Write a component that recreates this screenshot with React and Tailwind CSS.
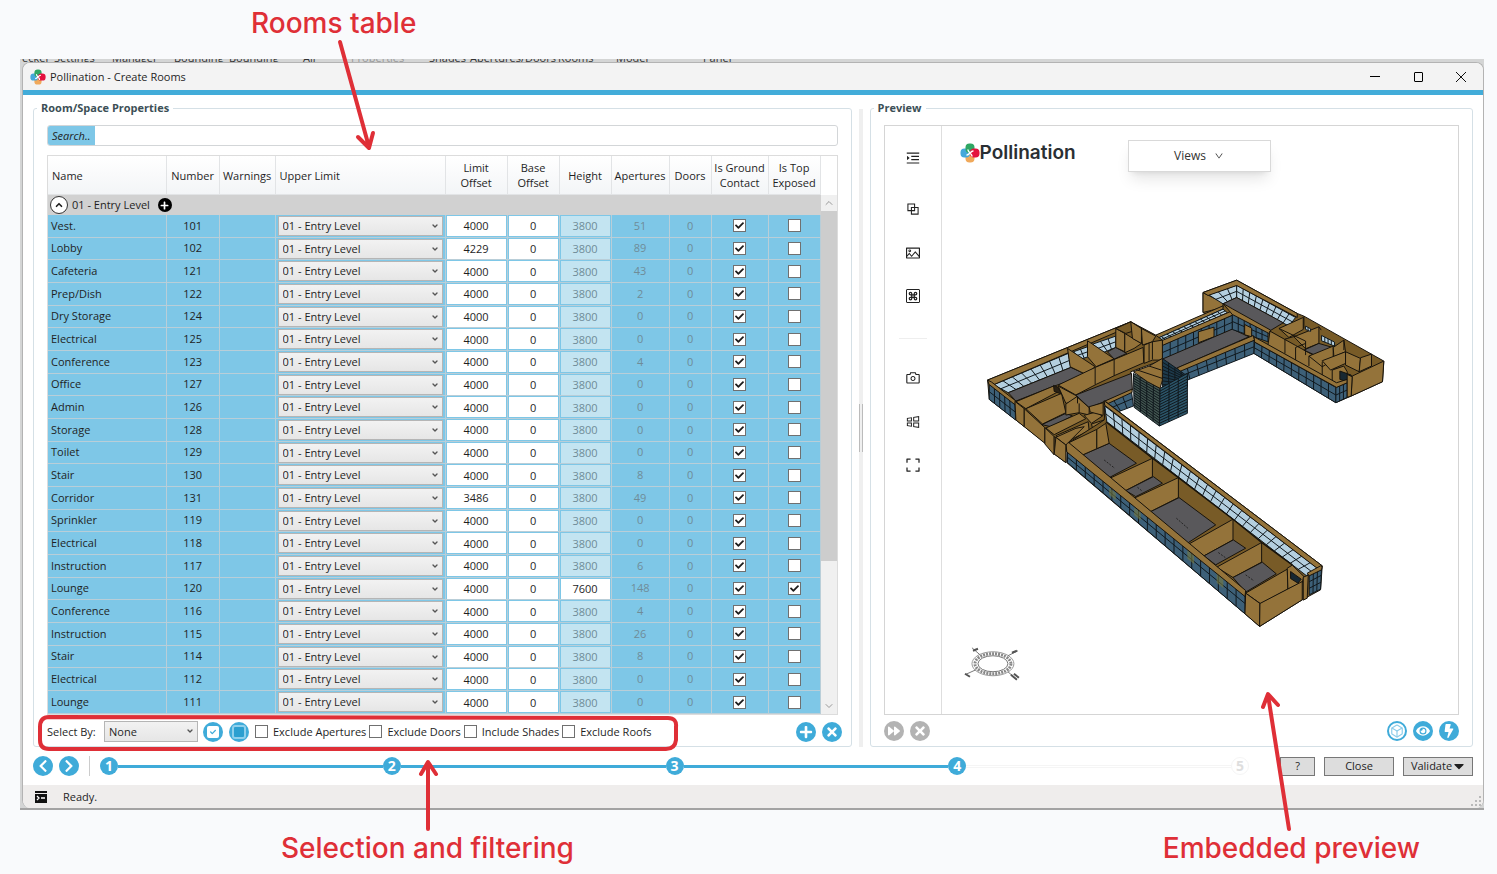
import { useState } from 'react';
import { FaPlus, FaTimes, FaCheck, FaChevronLeft, FaChevronRight, FaForward, FaEye, FaBolt, FaCaretDown } from 'react-icons/fa';
import {
  AiOutlineMenuUnfold, AiOutlineBlock, AiOutlinePicture, AiOutlineCamera,
  AiOutlineWindows, AiOutlineExpand, AiOutlineDown,
} from 'react-icons/ai';
import { Box, ChevronDown, ChevronUp, Command } from 'lucide-react';

const LEVEL = '01 - Entry Level';

// name, number, limit offset, apertures, height, top exposed
const ROOMS = [
  ['Vest.', 101, 4000, 51],
  ['Lobby', 102, 4229, 89],
  ['Cafeteria', 121, 4000, 43],
  ['Prep/Dish', 122, 4000, 2],
  ['Dry Storage', 124, 4000, 0],
  ['Electrical', 125, 4000, 0],
  ['Conference', 123, 4000, 4],
  ['Office', 127, 4000, 0],
  ['Admin', 126, 4000, 0],
  ['Storage', 128, 4000, 0],
  ['Toilet', 129, 4000, 0],
  ['Stair', 130, 4000, 8],
  ['Corridor', 131, 3486, 49],
  ['Sprinkler', 119, 4000, 0],
  ['Electrical', 118, 4000, 0],
  ['Instruction', 117, 4000, 6],
  ['Lounge', 120, 4000, 148, 7600, true],
  ['Conference', 116, 4000, 4],
  ['Instruction', 115, 4000, 26],
  ['Stair', 114, 4000, 8],
  ['Electrical', 112, 4000, 0],
  ['Lounge', 111, 4000, 0],
];

const COLUMNS = [
  { label: 'Name', width: '', align: 'text-left px-1' },
  { label: 'Number', width: 'w-[53px]', align: 'text-center' },
  { label: 'Warnings', width: 'w-[56px]', align: 'text-center' },
  { label: 'Upper Limit', width: 'w-[170px]', align: 'text-left px-1' },
  { label: 'Limit Offset', width: 'w-[62px]', align: 'text-center px-2' },
  { label: 'Base Offset', width: 'w-[52px]', align: 'text-center px-2' },
  { label: 'Height', width: 'w-[52px]', align: 'text-center' },
  { label: 'Apertures', width: 'w-[58px]', align: 'text-center' },
  { label: 'Doors', width: 'w-[42px]', align: 'text-center' },
  { label: 'Is Ground Contact', width: 'w-[57px]', align: 'text-center' },
  { label: 'Is Top Exposed', width: 'w-[52px]', align: 'text-center' },
];

const FILTERS = ['Exclude Apertures', 'Exclude Doors', 'Include Shades', 'Exclude Roofs'];

const LogoMark = ({ className }) => (
  <svg viewBox="0 0 20 20" className={className} aria-hidden="true">
    <rect x="5.5" y="10" width="9" height="9.5" rx="4" fill="#f0a95b" />
    <rect x="0.5" y="5.5" width="9.5" height="9" rx="4" fill="#45a8da" />
    <rect x="5.5" y="0.5" width="9" height="9.5" rx="4" fill="#2fa764" />
    <rect x="10" y="5.5" width="9.5" height="9" rx="4" fill="#e4123f" />
    <path d="M10 10 C9 9 8 8 8 7 M10 10 C11 9 12 8 13 8 M10 10 C11 11 12 12 12 13 M10 10 C9 11 8 12 7 12" stroke="#fff" strokeWidth="1.4" fill="none" strokeLinecap="round" />
  </svg>
);

const RoundButton = ({ label, children, className = 'bg-[#3fabd9] text-white' }) => (
  <button type="button" aria-label={label} title={label}
    className={`flex h-5 w-5 shrink-0 items-center justify-center rounded-full ${className}`}>
    {children}
  </button>
);

const Tick = ({ label, checked, id }) => (
  <span className="relative inline-flex h-[13px] w-[13px] shrink-0">
    <input id={id} type="checkbox" defaultChecked={checked} aria-label={label}
      className="peer h-[13px] w-[13px] appearance-none border border-[#707070] bg-white" />
    <FaCheck className="pointer-events-none absolute left-[2px] top-[2px] hidden h-[9px] w-[9px] text-[#1c1c1c] peer-checked:block" />
  </span>
);

const Dropdown = ({ id, label, options, className }) => (
  <span className={`relative block ${className}`}>
    <select id={id} aria-label={label}
      className="block h-full w-full appearance-none border border-[#b5b5b5] bg-linear-to-b from-[#f2f2f2] to-[#e6e6e6] px-1 leading-4">
      {options.map(o => <option key={o}>{o}</option>)}
    </select>
    <ChevronDown className="pointer-events-none absolute right-1 top-[6px] h-2 w-2 text-[#555]" strokeWidth={4} />
  </span>
);

const GroupBox = ({ title, className, children }) => (
  <fieldset className={`min-w-0 rounded-[3px] border border-[#d5e0e6] px-[13px] pb-[2px] ${className}`}>
    <legend className="-ml-[10px] px-1 font-bold leading-4 text-[#3c4f56]">{title}</legend>
    {children}
  </fieldset>
);

function RoomsTable() {
  const [open, setOpen] = useState(true);
  const cell = 'border-b border-r border-[#b9ced8] p-0';

  return (
    <div className="mt-[9px] flex border border-[#dcdcdc]">
      <table className="h-[558px] min-w-0 flex-1 table-fixed border-separate border-spacing-0">
        <thead>
          <tr>
            {COLUMNS.map(c => (
              <th key={c.label}
                className={`h-[39px] border-b border-r border-[#e2e4e6] bg-linear-to-b from-white to-[#f3f5f7] p-0 font-normal leading-[15px] ${c.width} ${c.align}`}>
                {c.label}
              </th>
            ))}
          </tr>
        </thead>
        <tbody>
          <tr>
            <td colSpan={11} className="h-[20px] bg-[#d1d1d1] p-0">
              <div className="flex items-center">
                <button type="button" aria-label="Toggle level" onClick={() => setOpen(!open)}
                  className="ml-[2px] flex h-[18px] w-[18px] items-center justify-center rounded-full border border-[#333] bg-white">
                  <ChevronUp className="h-[10px] w-[10px]" strokeWidth={4} />
                </button>
                <span className="ml-1 leading-4">{LEVEL}</span>
                <button type="button" aria-label="Add to level"
                  className="ml-2 flex h-[14px] w-[14px] items-center justify-center rounded-full bg-black text-white">
                  <FaPlus className="h-[9px] w-[9px]" />
                </button>
              </div>
            </td>
          </tr>
          {open && ROOMS.map(([name, number, offset, apertures, height, top]) => (
            <tr key={number} className="bg-[#7ec7e7]">
              <td className={`${cell} pl-[3px]`}>{name}</td>
              <td className={`${cell} text-center`}>{number}</td>
              <td className={cell} />
              <td className={`${cell} px-[2px]`}>
                <Dropdown label={`Upper limit ${number}`} options={[LEVEL]} className="h-5" />
              </td>
              <td className={`${cell} px-px`}>
                <input aria-label={`Limit offset ${number}`} defaultValue={offset} className="block h-5 w-full bg-white text-center" />
              </td>
              <td className={`${cell} px-px`}>
                <input aria-label={`Base offset ${number}`} defaultValue={0} className="block h-5 w-full bg-white text-center" />
              </td>
              <td className={`${cell} px-px`}>
                <input aria-label={`Height ${number}`} defaultValue={height ?? 3800} disabled={!height}
                  className="block h-5 w-full bg-white text-center disabled:bg-[#c3e4f1] disabled:text-[#6f8c98]" />
              </td>
              <td className={`${cell} text-center text-[#6f8c98]`}>{apertures}</td>
              <td className={`${cell} text-center text-[#6f8c98]`}>0</td>
              <td className={cell}>
                <div className="flex justify-center"><Tick label={`Ground contact ${number}`} checked /></div>
              </td>
              <td className={cell}>
                <div className="flex justify-center"><Tick label={`Top exposed ${number}`} checked={!!top} /></div>
              </td>
            </tr>
          ))}
        </tbody>
      </table>
      <div className="flex w-4 flex-col bg-[#f0f0f0]">
        <div className="h-[39px] bg-white" />
        <div className="flex h-4 items-center justify-center"><ChevronUp className="h-3 w-3 text-[#999]" /></div>
        <div className="h-[350px] bg-[#cdcdcd]" />
        <div className="flex flex-1 items-end justify-center pb-[2px]"><ChevronDown className="h-3 w-3 text-[#999]" /></div>
      </div>
    </div>
  );
}

function SelectionBar() {
  return (
    <div className="flex items-center pb-[2px] pt-[6px]">
      <label htmlFor="select-by" className="w-[57px] leading-4">Select By:</label>
      <Dropdown id="select-by" label="Select By" options={['None']} className="h-[21px] w-[94px]" />
      <div className="ml-[5px] flex gap-[6px]">
        <RoundButton label="Select checked">
          <span className="flex h-3 w-3 items-center justify-center rounded-[2px] bg-white text-[#3fabd9]"><FaCheck className="h-[6px] w-[6px]" /></span>
        </RoundButton>
        <RoundButton label="Select all">
          <span className="h-[14px] w-[14px] rounded-[3px] border-2 border-[#8fd0ec] bg-[#2b9fd0]" />
        </RoundButton>
      </div>
      <div className="ml-[6px] flex gap-[3px]">
        {FILTERS.map((f, i) => (
          <label key={f} htmlFor={`filter-${i}`} className="flex items-center gap-[5px] whitespace-nowrap leading-4">
            <Tick id={`filter-${i}`} label={f} />
            {f}
          </label>
        ))}
      </div>
      <div className="-mr-1 ml-auto flex gap-[6px]">
        <RoundButton label="Add"><FaPlus className="h-[14px] w-[14px]" /></RoundButton>
        <RoundButton label="Remove"><FaTimes className="h-[14px] w-[14px]" /></RoundButton>
      </div>
    </div>
  );
}

/* ── Model drawing helpers ── */

const TAN = '#94733a';
const DARK = '#785b27';
const FLOOR = '#59585b';
const LIGHT = '#b4cfdf';
const BLUE = '#3d6078';

const Face = ({ p, fill = TAN }) => (
  <polygon points={p} fill={fill} stroke="#17130c" strokeWidth="3" strokeLinejoin="round" />
);

// Glazed quad a-b (top edge) and d-c (bottom edge) with mullions
const Glass = ({ a, b, c, d, cols, rows = 2, fill = BLUE }) => {
  const mix = (p, q, t) => [p[0] + (q[0] - p[0]) * t, p[1] + (q[1] - p[1]) * t];
  const lines = [];
  for (let i = 1; i < cols; i++) lines.push([mix(a, b, i / cols), mix(d, c, i / cols)]);
  for (let j = 1; j < rows; j++) lines.push([mix(a, d, j / rows), mix(b, c, j / rows)]);
  return (
    <g stroke="#10181d" strokeWidth="3">
      <polygon points={[a, b, c, d].join(' ')} fill={fill} />
      {lines.map(([p, q], i) => <line key={i} x1={p[0]} y1={p[1]} x2={q[0]} y2={q[1]} />)}
    </g>
  );
};

const EastWing = () => (
  <g transform="translate(1180 260) scale(0.3333)">
    <Face p="67,97 168,60 350,160 370,168 610,303 606,365 512,408 466,428 220,280 67,157" fill={DARK} />
    <Face p="67,97 127,128 127,142 67,157" />
    <Glass a={[84, 104]} b={[168, 75]} c={[168, 112]} d={[127, 131]} cols={3} fill={LIGHT} />
    <Glass a={[168, 75]} b={[345, 172]} c={[325, 198]} d={[168, 112]} cols={9} fill={LIGHT} />
    <Face p="67,97 168,60 350,160 350,172 168,76 82,106" />
    <Face p="127,131 168,112 308,188 268,212 155,152" fill={FLOOR} />
    <Face p="-75,225 127,137 127,147 -75,237" />
    <Glass a={[-75, 237]} b={[127, 147]} c={[140, 158]} d={[-60, 247]} cols={12} fill={LIGHT} />
    <Glass a={[-55, 255]} b={[155, 165]} c={[155, 208]} d={[-55, 300]} cols={9} />
    <Face p="-65,245 155,152 158,164 -55,256" />
    <Face p="53,215 100,201 100,230 53,248" />
    <Face p="-55,297 155,207 205,230 -20,328" fill={FLOOR} />
    <Glass a={[155, 160]} b={[262, 215]} c={[262, 245]} d={[155, 208]} cols={6} />
    <Face p="192,193 213,204 213,230 192,224" />
    <Face p="127,130 155,146 270,210 265,220 155,163" />
    <Glass a={[-10, 332]} b={[220, 240]} c={[220, 280]} d={[0, 368]} cols={8} />
    <Face p="-10,323 218,226 222,240 -5,335" />
    <Face p="268,213 345,256 425,300 470,330 470,372 345,305 262,255" />
    <Face p="295,205 368,172 368,208 325,232" />
    <Face p="340,230 415,200 415,250 375,266" />
    <Face p="370,270 415,250 456,262 405,286" fill={FLOOR} />
    <Face p="385,288 458,258 458,300 425,320" />
    <Face p="458,262 490,240 495,275 460,290" />
    <Face p="425,302 495,275 495,310 450,330" />
    <Face p="495,275 540,295 536,335 495,315" />
    <Face p="540,293 573,282 573,318 536,335" />
    <path d="M295 205 375 243 375 285 M313 237 V280 M345 262 V300 M385 288 V318 M425 305 V345 M313 237 345 228 M345 262 375 250 M370 168 V205 M490 240 V270 M415 200 422 210" stroke="#17130c" strokeWidth="3" fill="none" />
    <Glass a={[375, 198]} b={[390, 206]} c={[390, 214]} d={[375, 208]} cols={2} rows={1} fill={LIGHT} />
    <Glass a={[423, 226]} b={[462, 246]} c={[462, 258]} d={[423, 242]} cols={4} rows={1} fill={LIGHT} />
    <Face p="455,330 490,318 500,335 500,370 470,372 455,362" />
    <Face p="478,333 512,345 512,368 478,358" fill="#182832" />
    <Glass a={[222, 246]} b={[466, 382]} c={[466, 428]} d={[220, 280]} cols={11} />
    <Glass a={[466, 382]} b={[500, 368]} c={[500, 412]} d={[466, 428]} cols={3} />
    <Face p="220,230 468,368 500,358 500,368 468,382 222,246" />
    <Face p="515,348 610,303 606,365 512,408" />
    <Face p="500,343 515,350 512,408 500,412" />
  </g>
);

const WestWing = () => (
  <g transform="translate(970 260) scale(0.3333)">
    <Face p="50,360 480,185 555,225 575,240 575,300 480,335 480,392 400,430 410,570 250,570 135,480 55,418" fill={DARK} />
    <Glass a={[68, 374]} b={[292, 280]} c={[300, 322]} d={[112, 398]} cols={8} fill={LIGHT} />
    <Glass a={[308, 275]} b={[350, 260]} c={[352, 290]} d={[328, 298]} cols={2} fill={LIGHT} />
    <Glass a={[366, 252]} b={[435, 228]} c={[435, 262]} d={[396, 278]} cols={3} fill={LIGHT} />
    <Face p="50,360 480,185 484,196 68,374" />
    <Face p="112,398 300,322 350,345 250,378 135,423" fill={FLOOR} />
    <Face p="290,265 373,320 345,343 298,320" />
    <Face p="350,242 430,296 376,320 350,290" />
    <Face p="410,275 435,262 468,280 430,297" fill={FLOOR} />
    <Face p="435,205 462,220 462,275 435,262" />
    <Face p="462,220 512,250 490,265 462,278" />
    <Face p="435,205 480,185 512,205 465,220" fill={DARK} />
    <Face p="480,185 512,205 512,250 485,235" />
    <Face p="512,205 555,228 545,245 515,255" />
    <Face p="262,375 373,322 517,262 519,308 430,347 376,373 315,405" />
    <Face p="520,255 545,245 575,240 575,300 545,300 520,310" />
    <path d="M373 322 V373 M430 297 V347 M535 250 V302 M545 245 V298" stroke="#17130c" strokeWidth="3" />
    <Face p="315,405 482,340 485,390 400,425 355,443" fill={FLOOR} />
    <Glass a={[400, 432]} b={[482, 394]} c={[488, 438]} d={[430, 460]} cols={3} />
    <Face p="398,425 484,387 484,397 404,434" />
    <Face p="135,425 248,378 262,395 165,446" />
    <Face p="165,446 272,400 285,458 215,492" />
    <Face p="248,376 262,382 272,402 250,394" fill="#2a2114" />
    <Face p="262,378 318,408 312,425 285,430" />
    <Face p="213,494 285,460 305,468 240,500" fill={FLOOR} />
    <Face p="285,432 318,410 355,443 355,465 325,458 285,465" />
    <Face p="225,504 325,460 345,476 250,524" />
    <Face p="255,527 352,485 355,512 285,546" />
    <Face p="340,466 375,456 395,468 362,490" />
    <Face p="355,440 397,428 397,466 358,456" />
    <Face p="292,548 380,508 380,566 330,585" />
    <Face p="362,492 412,476 412,550 380,566" />
    <path d="M380 500 V566 M320 410 V430 M325 430 V458" stroke="#17130c" strokeWidth="3" />
    <Glass a={[55, 372]} b={[132, 432]} c={[134, 480]} d={[55, 418]} cols={5} />
    <Face p="50,360 62,366 135,423 132,434 54,373" />
    <Face p="132,424 160,446 160,500 135,480" />
    <Face p="160,446 222,503 222,550 160,500" />
    <Face p="222,503 250,530 250,585 222,552" />
    <Face p="250,530 285,555 285,608 250,582" />

    {/* louvered tower */}
    <Glass a={[575, 295]} b={[650, 348]} c={[650, 380]} d={[575, 385]} cols={4} rows={8} fill="#1d3a4b" />
    <Glass a={[488, 340]} b={[568, 385]} c={[566, 498]} d={[490, 442]} cols={4} rows={14} fill="#41544f" />
    <Glass a={[568, 385]} b={[650, 340]} c={[650, 460]} d={[566, 498]} cols={3} rows={14} fill="#2b5468" />
    <Face p="488,335 535,318 575,295 575,360 568,385 530,365" />
    <path d="M500 330 575 355 M535 318 572 330" stroke="#17130c" strokeWidth="3" />
  </g>
);

const SouthWing = () => (
  <g transform="translate(1040 430) scale(0.3333)">
    <Face p="80,40 190,-30 195,-85 845,408 840,480 785,510 657,590 613,552 78,98" fill={DARK} />
    <Glass a={[192, -72]} b={[835, 418]} c={[797, 437]} d={[198, -25]} cols={25} fill={LIGHT} />
    <Face p="190,-88 845,408 836,420 192,-74" />
    <Face p="125,75 205,40 287,100 207,142" fill={FLOOR} />
    <Face p="80,40 168,-2 168,56 125,75" />
    <Face p="168,-2 195,-20 205,40 168,56" />
    <Face p="207,145 335,85 335,140 255,182" />
    <Face p="255,182 338,140 365,160 285,200" fill={FLOOR} />
    <Face p="280,205 413,143 413,203 330,245" />
    <Face p="330,245 415,203 525,285 440,340" fill={FLOOR} />
    <Face p="440,345 577,268 577,330 490,378" />
    <Face p="490,378 578,330 615,355 525,405" fill={FLOOR} />
    <Face p="528,412 663,338 663,397 577,443" />
    <Face p="577,443 665,397 707,432 615,487" fill={FLOOR} />
    <path d="M190 90 222 115 M290 172 305 184 M407 265 445 298 M533 368 555 384 M615 435 640 453" stroke="#242424" strokeWidth="3" strokeDasharray="6 4" />
    <path d="M335 85 413 143 M413 143 577 268 M577 268 663 338 M663 338 755 405 M195 -25 335 85" stroke="#17130c" strokeWidth="4" />
    <Face p="615,490 740,418 742,478 660,522" />
    <Face p="740,415 755,406 790,440 785,458 742,478" />
    <Face p="750,425 782,448 772,460 750,446" fill="#182832" />
    <Glass a={[80, 66]} b={[613, 490]} c={[613, 552]} d={[80, 98]} cols={20} />
    {[205, 280, 440, 528].map(x => (
      <polygon key={x} points={`${x},${x * 0.796 + 10} ${x + 20},${x * 0.796 + 26} ${x + 20},${x * 0.82 + 42} ${x},${x * 0.82 + 26}`} fill="#77793f" opacity="0.6" />
    ))}
    <Face p="75,40 84,38 615,482 613,500 78,66" />
    <Face p="45,22 105,-5 130,-10 80,40 75,45" />
    <Face p="45,22 75,45 75,98 40,72" />
    <Face p="615,490 658,521 657,590 613,552" />
    <Face p="658,521 785,455 785,510 657,590" />
    <Face p="788,442 803,436 800,505 788,511" />
    <Glass a={[806, 436]} b={[843, 416]} c={[840, 478]} d={[806, 495]} cols={3} rows={3} />
    <Face p="800,430 840,408 845,410 843,420 806,438" />
  </g>
);

const Compass = () => (
  <g fill="none" stroke="#555">
    <ellipse cx="992" cy="664" rx="21" ry="12" stroke="#999" />
    <ellipse cx="992" cy="664" rx="18" ry="10" stroke="#888" strokeWidth="3" strokeDasharray="2 1" />
    <ellipse cx="992" cy="664" rx="15" ry="8" stroke="#777" />
    <path d="M971 648 979 655 M1017 651 1007 656 M964 675 975 670 M1016 680 1007 672" stroke="#777" />
    <path d="M972 651 977 649 M1011 653 1016 651 M964 674 969 677 M1010 675 1016 680 M1013 674 1018 678" strokeWidth="2" />
  </g>
);

const Tool = ({ label, icon: Icon, className }) => (
  <button type="button" aria-label={label} title={label} className={`flex h-4 w-4 items-center justify-center text-[#222] ${className}`}>
    <Icon className="h-4 w-4" />
  </button>
);

const CommandBox = () => (
  <span className="flex h-[14px] w-[14px] items-center justify-center rounded-[1px] border border-[#222]">
    <Command className="h-[10px] w-[10px]" strokeWidth={3} />
  </span>
);

function Preview() {
  return (
    <div className="mt-[9px] flex h-[590px] border border-[#d5d5d5]">
      <div className="flex w-[57px] shrink-0 flex-col items-center border-r border-[#dedede]">
        <Tool label="Expand menu" icon={AiOutlineMenuUnfold} className="mt-6" />
        <Tool label="Layers" icon={AiOutlineBlock} className="mt-[35px]" />
        <Tool label="Images" icon={AiOutlinePicture} className="mt-7" />
        <Tool label="Shortcuts" icon={CommandBox} className="mt-[27px]" />
        <hr className="mt-[34px] w-7 border-[#eee]" />
        <Tool label="Screenshot" icon={AiOutlineCamera} className="mt-[31px]" />
        <Tool label="Windows" icon={AiOutlineWindows} className="mt-7" />
        <Tool label="Full screen" icon={AiOutlineExpand} className="mt-[27px]" />
      </div>
      <div className="flex min-w-0 flex-1 flex-col">
        <div className="flex h-[46px] items-end">
          <div className="mb-[9px] ml-[18px] flex items-center text-[#2a2f33]">
            <LogoMark className="h-5 w-5" />
            <span className="font-[Inter] text-[19px] font-semibold leading-5">Pollination</span>
          </div>
          <button type="button" className="ml-[52px] flex h-8 w-[143px] items-center justify-center gap-2 border border-[#d9d9d9] bg-white text-xs text-[#333] shadow-lg">
            Views <AiOutlineDown className="h-[10px] w-[10px]" />
          </button>
        </div>
        <svg viewBox="941 172 517 542" className="min-h-0 w-full flex-1" role="img" aria-label="Building model">
          <EastWing />
          <WestWing />
          <SouthWing />
          <Compass />
        </svg>
      </div>
    </div>
  );
}

function Steps() {
  return (
    <ol className="ml-[10px] mr-[31px] flex flex-1 items-center">
      {[1, 2, 3, 4, 5].map(n => (
        <li key={n} className={`flex items-center ${n > 1 ? 'flex-1' : ''}`}>
          {n > 1 && <span className={`h-[3px] flex-1 ${n < 5 ? 'bg-[#3fabd9]' : 'border-y border-[#f5f5f5]'}`} />}
          <span className={`flex h-[18px] w-[18px] items-center justify-center rounded-full text-[14px] font-bold leading-4 ${
            n < 5 ? 'bg-[#3fabd9] text-white' : 'border border-[#f5f5f5] text-[#dedede]'}`}>
            {n}
          </span>
        </li>
      ))}
    </ol>
  );
}

const FormButton = ({ children, className }) => (
  <button type="button" className={`flex h-[19px] items-center justify-center border border-[#777] bg-[#ddd] leading-4 ${className}`}>
    {children}
  </button>
);

// Ribbon labels of the host program, cut off by the dialog's top edge
const Ribbon = () => (
  <div className="flex h-[3px] items-end overflow-hidden bg-[#d4d5d5] leading-[8px] text-[#333]">
    <span className="w-8 shrink-0">ecker</span>
    <span className="w-[58px] shrink-0">Settings</span>
    <span className="w-[62px] shrink-0">Manager</span>
    <span className="w-[55px] shrink-0">Bounding</span>
    <span className="w-[74px] shrink-0">Bounding</span>
    <span className="w-12 shrink-0">Air</span>
    <span className="w-[78px] shrink-0 text-[#999]">Properties</span>
    <span className="w-[41px] shrink-0">Shades</span>
    <span className="w-[88px] shrink-0">Apertures/Doors</span>
    <span className="w-[58px] shrink-0">Rooms</span>
    <span className="w-[87px] shrink-0">Model</span>
    <span>Panel</span>
  </div>
);

const Callouts = () => (
  <svg className="pointer-events-none absolute left-0 top-0 h-[874px] w-[1497px]" fill="none" stroke="#df2f37" strokeWidth="4" strokeLinecap="round" strokeLinejoin="round" aria-hidden="true">
    <path d="M340 42 L369 147 M358 137 L369 148 L373 133" />
    <path d="M428 829 L428 763 M421 774 L428 762 L436 774" />
    <path d="M1289 829 L1268 695 M1263 707 L1268 694 L1278 705" />
    <path d="M49 717 L668 718 Q677 718 676 727 L676 740 Q675 749 666 749 L49 749 Q40 749 40 740 L40 727 Q40 717 49 717 Z" />
  </svg>
);

export default function App() {
  return (
    <div className="relative min-h-screen bg-[#f9fafc] font-['Open_Sans',sans-serif] text-[11px] text-[#1f1f1f]">
      <header className="flex h-[59px] pl-[251px] pt-[7px] font-[Inter] text-[28px] font-medium leading-8 text-[#df2f37]">
        Rooms table
      </header>

      <main className="ml-5 mr-[13px] border-b-2 border-[#a3a3a3] bg-[#d4d5d5] pl-[2px]">
        <Ribbon />
        <div className="overflow-hidden rounded-lg border-x border-t border-[#b3b3b3] bg-white">
          <div className="flex h-[27px] items-center bg-[#f3f3f3] pl-[7px] pr-4">
            <LogoMark className="h-4 w-4" />
            <h1 className="ml-1 text-[11px] leading-4">Pollination - Create Rooms</h1>
            <div className="ml-auto flex items-center gap-8">
              <button type="button" aria-label="Minimize" className="flex h-3 w-3 items-center">
                <span className="h-px w-[10px] bg-black" />
              </button>
              <button type="button" aria-label="Maximize" className="h-[10px] w-[9px] rounded-[1px] border border-black" />
              <button type="button" aria-label="Close window">
                <svg viewBox="0 0 12 12" className="h-3 w-3" stroke="#111"><path d="M1 1 11 11 M11 1 1 11" /></svg>
              </button>
            </div>
          </div>
          <div className="h-[5px] bg-[#42acd9]" />

          <div className="flex px-[10px] pt-[5px]">
            <GroupBox title="Room/Space Properties" className="flex-[790]">
              <div className="mt-[9px] flex h-[21px] overflow-hidden rounded-[3px] border border-[#d3d6d8]">
                <label htmlFor="search" className="bg-[#7ec7e7] pl-1 pr-[5px] italic leading-[19px]">Search..</label>
                <input id="search" className="min-w-0 flex-1 px-1 outline-none" />
              </div>
              <RoomsTable />
              <SelectionBar />
            </GroupBox>
            <div className="mx-[7px] mt-[9px] flex w-1 items-center bg-[#efefef]">
              <span className="h-12 w-full border-x border-[#bbb]" />
            </div>
            <GroupBox title="Preview" className="flex-[575]">
              <Preview />
              <div className="flex items-center gap-[6px] pt-[6px]">
                <RoundButton label="Run" className="bg-[#b3b3b3] text-white"><FaForward className="h-3 w-3" /></RoundButton>
                <RoundButton label="Cancel" className="bg-[#b3b3b3] text-white"><FaTimes className="h-[14px] w-[14px]" /></RoundButton>
                <span className="flex-1" />
                <RoundButton label="Model" className="border-2 border-[#3fabd9] bg-white text-[#8dcce9]"><Box className="h-[14px] w-[14px]" /></RoundButton>
                <RoundButton label="Show"><FaEye className="h-[14px] w-[14px]" /></RoundButton>
                <RoundButton label="Energy"><FaBolt className="h-[14px] w-[14px]" /></RoundButton>
              </div>
            </GroupBox>
          </div>

          <div className="flex h-[38px] items-center px-[10px]">
            <div className="flex gap-[6px]">
              <RoundButton label="Back"><FaChevronLeft className="h-[14px] w-[14px]" /></RoundButton>
              <RoundButton label="Next"><FaChevronRight className="h-[14px] w-[14px]" /></RoundButton>
            </div>
            <span className="ml-[10px] h-5 w-px bg-[#ccc]" />
            <Steps />
            <div className="flex gap-[9px]">
              <FormButton className="w-[35px]">?</FormButton>
              <FormButton className="w-[70px]">Close</FormButton>
              <FormButton className="w-[70px]">Validate <FaCaretDown className="ml-px h-4 w-3" /></FormButton>
            </div>
          </div>

          <footer className="flex h-[23px] items-center bg-[#efedec] pl-3">
            <svg viewBox="0 0 12 12" className="h-3 w-3" aria-hidden="true">
              <path d="M0 0h12v2H0z M0 3h12v9H0z" fill="#111" />
              <path d="M2 5l2 2-2 2 M6 7h4" stroke="#fff" strokeWidth="1.3" fill="none" />
            </svg>
            <span className="ml-4 leading-4">Ready.</span>
            <svg viewBox="0 0 10 10" className="ml-auto mr-[2px] mt-2 h-[10px] w-[10px]" fill="#b9b9b9" aria-hidden="true">
              <path d="M8 0h2v2H8z M8 4h2v2H8z M8 8h2v2H8z M4 4h2v2H4z M4 8h2v2H4z M0 8h2v2H0z" />
            </svg>
          </footer>
        </div>
      </main>

      <div className="flex justify-between pl-[281px] pr-[77px] pt-[22px] font-[Inter] text-[28px] font-medium leading-8 text-[#df2f37]">
        <p>Selection and filtering</p>
        <p>Embedded preview</p>
      </div>
      <Callouts />
    </div>
  );
}
